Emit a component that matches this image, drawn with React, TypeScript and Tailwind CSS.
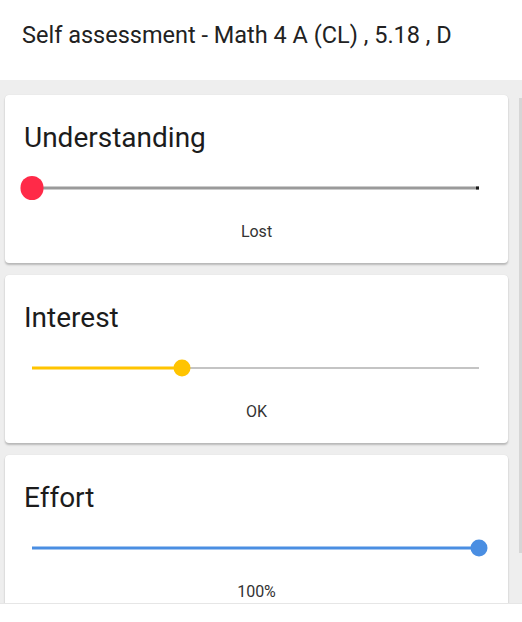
import React from 'react';

interface Assessment {
  title: string;
  value: number; // 0..100
  label: string;
  color: string;
}

const items: Assessment[] = [
  { title: 'Understanding', value: 0, label: 'Lost', color: '#ff2a48' },
  { title: 'Interest', value: 33.5, label: 'OK', color: '#ffc400' },
  { title: 'Effort', value: 100, label: '100%', color: '#4a8ee2' },
];

const Slider: React.FC<{ value: number; color: string }> = ({ value, color }) => {
  const atMin = value === 0;
  return (
    <div className="relative h-[24px] ml-[27px] mr-[29px]">
      {/* rest of the track */}
      <div
        className={
          'absolute left-0 right-0 top-1/2 -translate-y-1/2 ' +
          (atMin ? 'h-[3px] bg-[#9a9a9a]' : 'h-[2px] bg-[#c4c4c4]')
        }
      />
      {/* filled part */}
      {!atMin && (
        <div
          className="absolute left-0 top-1/2 -translate-y-1/2 h-[3px]"
          style={{ width: `${value}%`, backgroundColor: color }}
        />
      )}
      {atMin && (
        <div className="absolute right-0 top-1/2 -translate-y-1/2 w-[3px] h-[3px] bg-[#1a1a1a]" />
      )}
      <div
        className={
          'absolute top-1/2 -translate-x-1/2 -translate-y-1/2 rounded-full ' +
          (atMin ? 'w-[23px] h-[24px]' : 'w-[17px] h-[17px]')
        }
        style={{ left: `${value}%`, backgroundColor: color }}
      />
    </div>
  );
};

const Card: React.FC<{ item: Assessment }> = ({ item }) => (
  <div className="bg-white rounded-[4px] shadow-[0_2px_2px_rgba(0,0,0,0.22),0_0_1px_rgba(0,0,0,0.12)] pt-[26px] pb-[22px]">
    <h2 className="pl-[19px] text-[28px] leading-[33px] text-[#1c1c1c] font-normal">{item.title}</h2>
    <div className="mt-[22px]">
      <Slider value={item.value} color={item.color} />
    </div>
    <div className="mt-[22px] text-center text-[16px] leading-[19px] text-[#333]">{item.label}</div>
  </div>
);

export default function App() {
  return (
    <div
      className="w-[522px] h-[622px] flex flex-col overflow-hidden bg-white"
      style={{ fontFamily: 'Roboto, "Noto Sans", sans-serif' }}
    >
      <header className="h-[80px] shrink-0 flex items-center px-[22px] pb-[8px] bg-white">
        <h1 className="text-[23.5px] text-[#222] font-normal">Self assessment - Math 4 A (CL) , 5.18 , D</h1>
      </header>
      <main className="relative flex-1 min-h-0 overflow-hidden bg-[#eeeeee] pt-[15px] pl-[5px] pr-[14px]">
        <div className="flex flex-col gap-[12px]">
          {items.map(item => (
            <Card key={item.title} item={item} />
          ))}
        </div>
        {/* scrollbar */}
        <div className="absolute right-0 top-[18px] bottom-[50px] w-[3px] bg-[#d6d6d6]" />
      </main>
      <footer className="h-[19px] shrink-0 bg-white border-t border-[#e6e6e6]" />
    </div>
  );
}
